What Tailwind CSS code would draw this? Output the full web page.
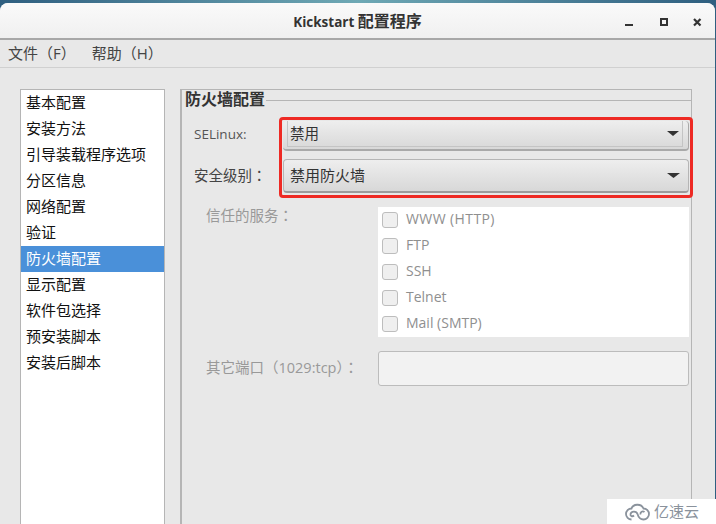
<!DOCTYPE html>
<html><head><meta charset="utf-8">
<script src="https://cdn.jsdelivr.net/npm/@tailwindcss/browser@4"></script>
</head>
<body class="m-0 overflow-hidden">
<div class="relative w-[716px] h-[524px] overflow-hidden bg-gradient-to-r from-[#2f5f80] via-[#6fa9b5] to-[#2f5f80] pt-[3px] font-['Open_Sans','Noto_Sans_CJK_SC',sans-serif] text-[15px] text-[#2e3436]">
  <div class="flex flex-col w-[715px] h-[521px] rounded-t-[8px] bg-[#e8e8e8] overflow-hidden">
    <header class="relative h-[37px] shrink-0 flex items-center justify-center bg-gradient-to-b from-[#fafafa] to-[#f0f0f0] border-b-2 border-[#a8a8a8]">
      <span class="font-bold text-[13.500px] text-[#333]">Kickstart <span class="text-[16px]">配置程序</span></span>
      <div class="absolute right-0 top-0 h-full">
        <svg width="94" height="37" viewBox="0 0 94 37" class="block"><rect x="4" y="21" width="8" height="2" fill="#333"/><rect x="40" y="16" width="6" height="6" fill="none" stroke="#333" stroke-width="2"/><path d="M73 16l6.500 6.500M79.500 16l-6.500 6.500" stroke="#333" stroke-width="2.200"/></svg>
      </div>
    </header>
    <nav class="h-[28px] shrink-0 flex items-center pl-[8px] gap-[16px] border-b border-[#d0d0d0] bg-[#e8e8e8] text-[#444]">
      <span>文件（F）</span><span>帮助（H）</span>
    </nav>
    <main class="flex flex-1 min-h-0 pt-[21px] pl-[20px]">
      <ul class="w-[145px] shrink-0 bg-white border border-[#b5b5b5] border-b-0 text-[#111]">
        <li class="h-[26px] pl-[5px] leading-[24px]">基本配置</li>
        <li class="h-[26px] pl-[5px] leading-[24px]">安装方法</li>
        <li class="h-[26px] pl-[5px] leading-[24px]">引导装载程序选项</li>
        <li class="h-[26px] pl-[5px] leading-[24px]">分区信息</li>
        <li class="h-[26px] pl-[5px] leading-[24px]">网络配置</li>
        <li class="h-[26px] pl-[5px] leading-[24px]">验证</li>
        <li class="h-[26px] pl-[5px] leading-[24px] bg-[#4a90d9] text-white">防火墙配置</li>
        <li class="h-[26px] pl-[5px] leading-[24px]">显示配置</li>
        <li class="h-[26px] pl-[5px] leading-[24px]">软件包选择</li>
        <li class="h-[26px] pl-[5px] leading-[24px]">预安装脚本</li>
        <li class="h-[26px] pl-[5px] leading-[24px]">安装后脚本</li>
      </ul>
      <section class="relative ml-[15px] w-[512px] shrink-0 border-t border-r border-l-2 border-[#b5b5b5] bg-[#e8e8e8]">
        <div class="flex items-start h-[11px]">
          <h2 class="font-bold text-[16px] text-[#333] pl-[3px] pr-[1px] h-[20px] leading-[19px] bg-[#e8e8e8] relative z-10 shrink-0">防火墙配置</h2>
          <div class="flex-1 h-[11px] border-b border-[#b5b5b5]"></div>
        </div>
        <div class="pl-[12px] pr-[1px] pt-[20px]">
          <div class="flex items-center h-[30px]">
            <label class="w-[89px] shrink-0 text-[#555] text-[13.500px] -mt-[4px]">SELinux:</label>
            <div class="w-[406px] h-[30px] flex border-b-2 border-r border-[#a9a9a9] rounded-[4px] bg-gradient-to-b from-[#eeeeee] to-[#d8d8d8] pl-[4px] pr-[5px]">
              <div class="flex-1 h-[26px] flex items-center justify-between border-r border-b border-l border-[#c4c4c4] pl-[2px] pr-[3px] text-[#333]">
                <span class="text-[14.500px]">禁用</span>
                <svg width="12" height="5" viewBox="0 0 12 5"><path d="M0 0h12L6 5z" fill="#333"/></svg>
              </div>
            </div>
          </div>
          <div class="flex items-center h-[34px] mt-[8px]">
            <label class="w-[89px] shrink-0 text-[#444] text-[14.500px] -mt-[2px]">安全级别<span class="font-['Noto_Sans_CJK_TC']">：</span></label>
            <div class="w-[406px] h-[34px] flex items-center justify-between border border-[#b5b5b5] border-b-2 border-b-[#9c9c9c] rounded-[4px] bg-gradient-to-b from-[#eeeeee] to-[#d8d8d8] pl-[6px] pr-[8px] text-[#333]">
              <span>禁用防火墙</span>
              <svg width="13" height="5" viewBox="0 0 13 5"><path d="M0 0h13L6.500 5z" fill="#333"/></svg>
            </div>
          </div>
          <div class="flex mt-[14px] text-[#999]">
            <label class="w-[184px] shrink-0 pl-[12px] leading-[16px] text-[14.500px]">信任的服务<span class="font-['Noto_Sans_CJK_TC']">：</span></label>
            <div class="w-[311px] h-[130px] bg-white text-[#8f8f8f] text-[14px] leading-[24px]">
              <div class="h-[26px] flex items-center pl-[4px] gap-[8px]"><span class="w-[16px] h-[16px] rounded-[3px] border border-[#bdbdbd] bg-[#efefef]"></span><span class="tracking-[0.4px] -mt-[2px]">WWW (HTTP)</span></div>
              <div class="h-[26px] flex items-center pl-[4px] gap-[8px]"><span class="w-[16px] h-[16px] rounded-[3px] border border-[#bdbdbd] bg-[#efefef]"></span><span class="-mt-[2px]">FTP</span></div>
              <div class="h-[26px] flex items-center pl-[4px] gap-[8px]"><span class="w-[16px] h-[16px] rounded-[3px] border border-[#bdbdbd] bg-[#efefef]"></span><span class="-mt-[2px]">SSH</span></div>
              <div class="h-[26px] flex items-center pl-[4px] gap-[8px]"><span class="w-[16px] h-[16px] rounded-[3px] border border-[#bdbdbd] bg-[#efefef]"></span><span class="-mt-[2px]">Telnet</span></div>
              <div class="h-[26px] flex items-center pl-[4px] gap-[8px]"><span class="w-[16px] h-[16px] rounded-[3px] border border-[#bdbdbd] bg-[#efefef]"></span><span class="-mt-[2px]">Mail (SMTP)</span></div>
            </div>
          </div>
          <div class="flex items-center mt-[14px] h-[35px] text-[#999]">
            <label class="w-[184px] shrink-0 pl-[12px] -mt-[3px] whitespace-nowrap text-[14.500px]">其它端口（1029:tcp）<span class="font-['Noto_Sans_CJK_TC']">：</span></label>
            <div class="w-[311px] h-[35px] rounded-[3px] border border-[#bcbcbc] bg-[#f2f2f2]"></div>
          </div>
        </div>
      </section>
    </main>
  </div>
  <div class="absolute left-[279px] top-[117px] w-[414px] h-[81px] rounded-[4px] border-[3px] border-[#ee2a24]"></div>
  <div class="absolute right-0 bottom-0 w-[109px] h-[25px] bg-white flex items-center pl-[18px] gap-[4px] text-[#8a929c] text-[15px] leading-none">
    <svg width="25" height="18" viewBox="0 0 25 18" fill="none" stroke="#8a929c" stroke-width="1.800"><path d="M6.500 16.500a5.500 5.500 0 1 1 0-11C8 1 16 0 18.500 5.500a5.500 5.500 0 1 1 0 11c-3 0-5-2-6-5.500"/><path d="M12.500 11c-1-3-6-3.500-7 0-.5 2 2 3 3.500 1.500"/><path d="M19.500 9c-2-1.500-4.500 0-4 2.500"/></svg>
    <span>亿速云</span>
  </div>
</div>
</body></html>
